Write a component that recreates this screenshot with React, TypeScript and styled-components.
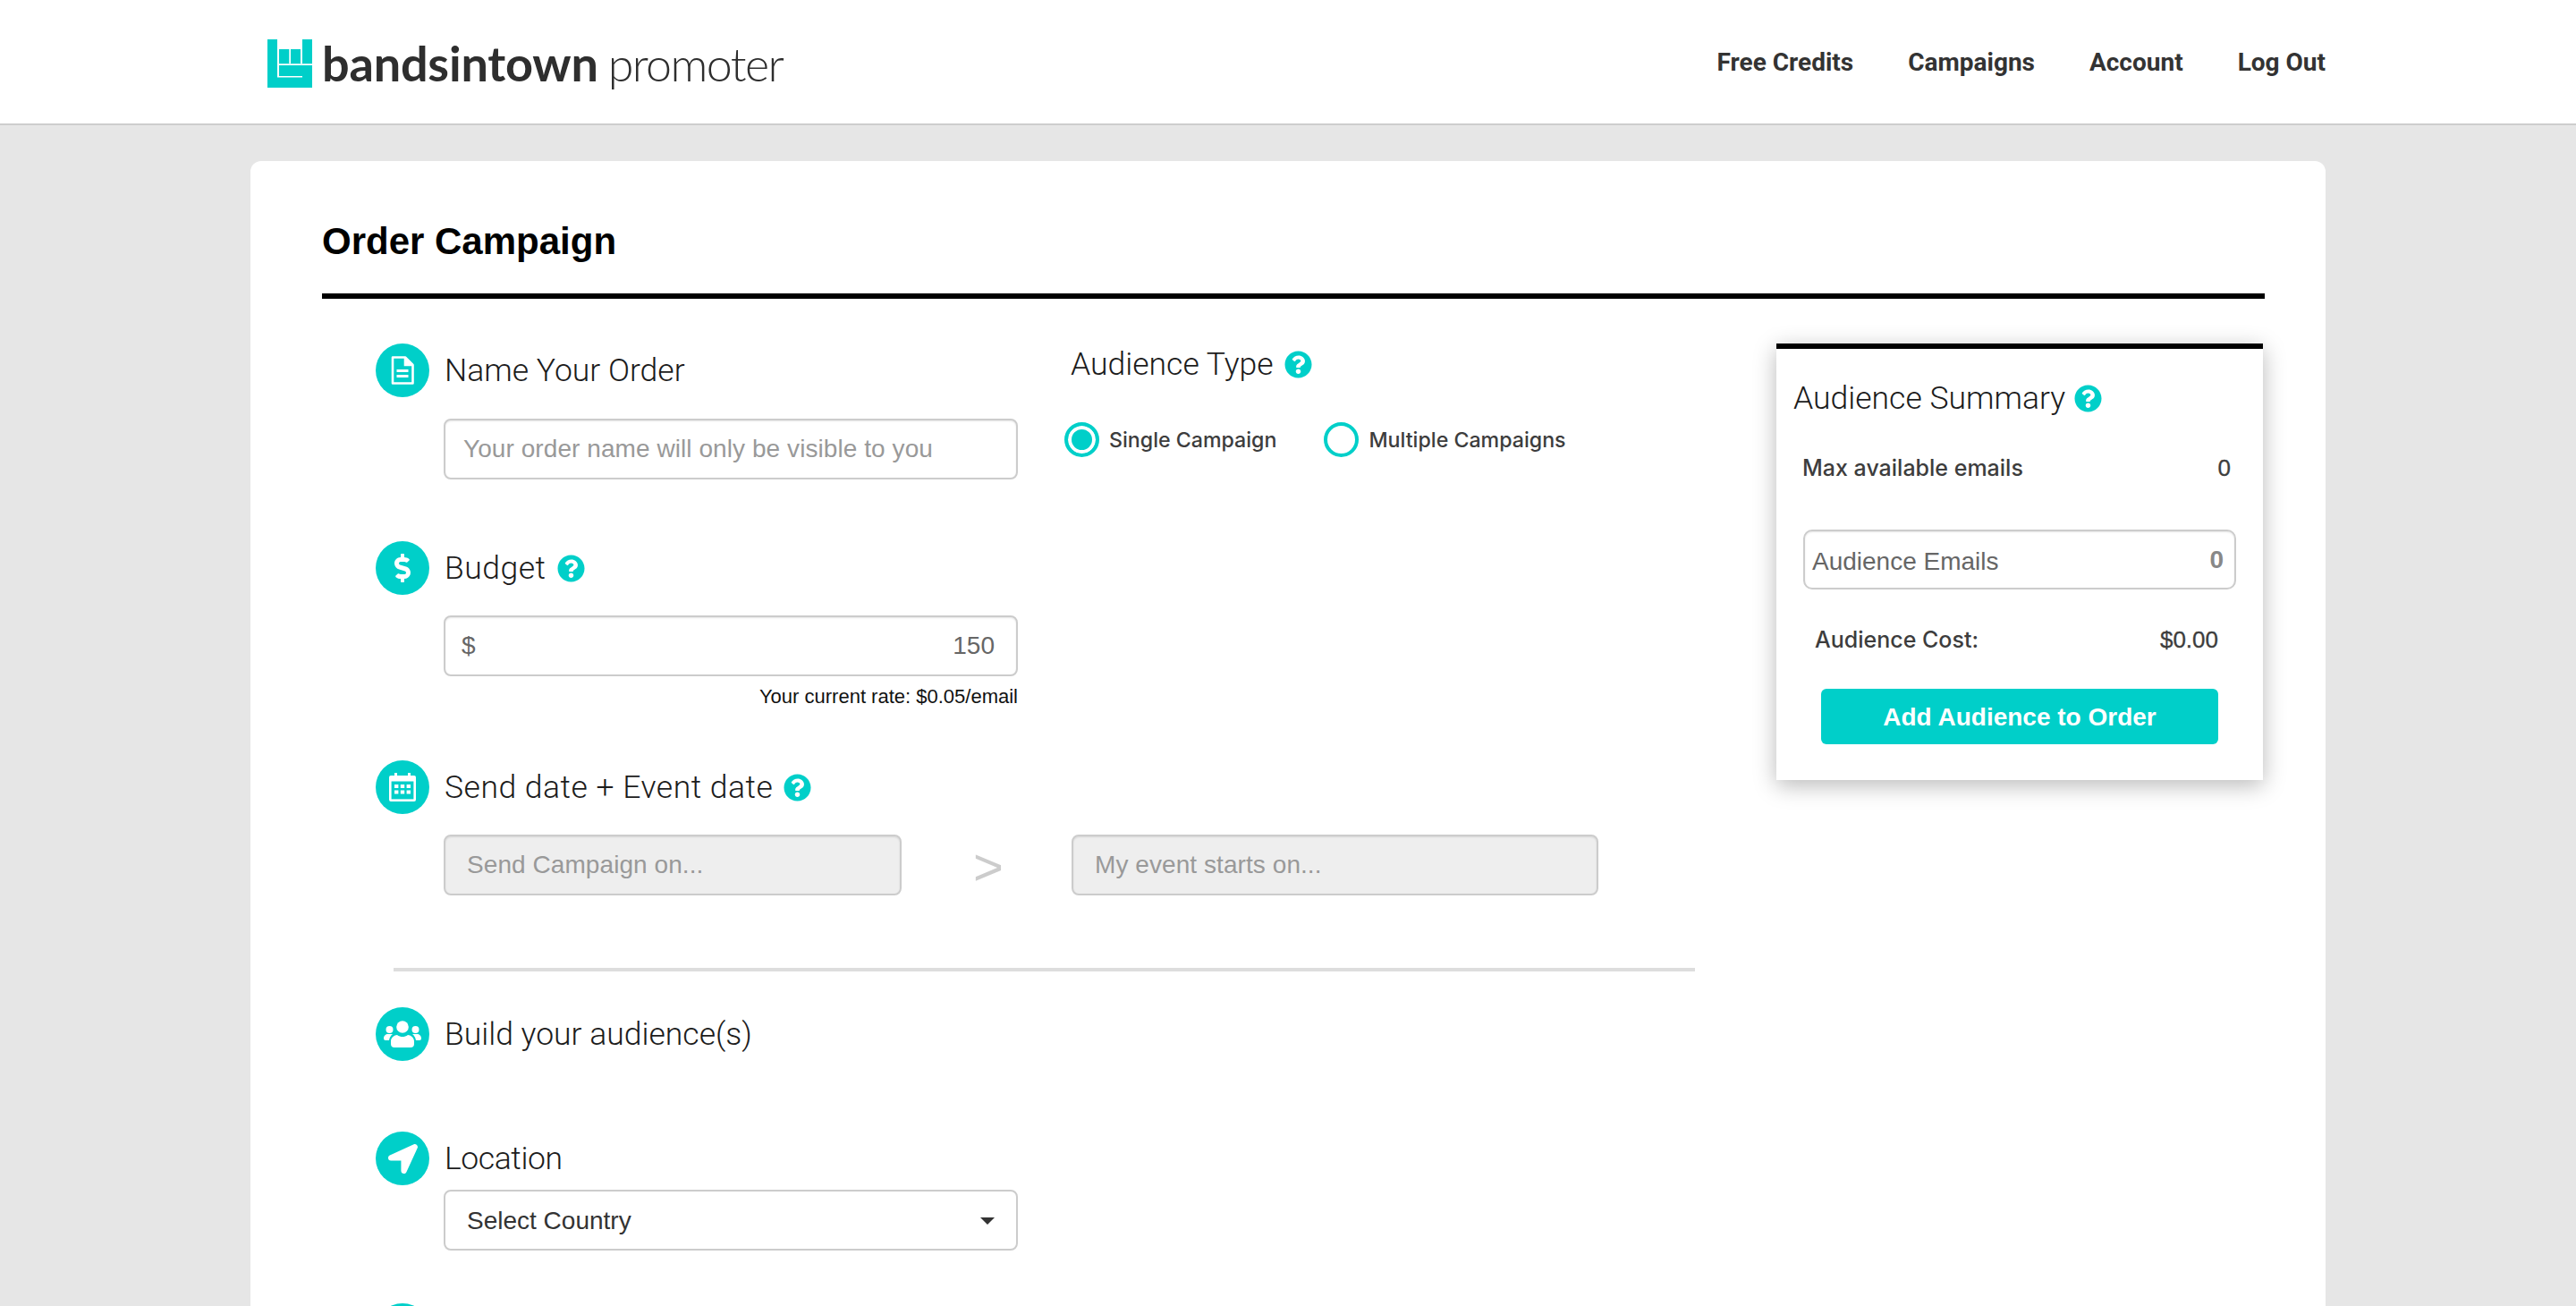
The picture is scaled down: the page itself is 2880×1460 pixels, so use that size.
import React from 'react';
import styled, { createGlobalStyle } from 'styled-components';
import { FaDollarSign, FaLocationArrow, FaQuestionCircle } from 'react-icons/fa';

const TEAL = '#00cfc9';

const Global = createGlobalStyle`
  html, body { margin: 0; padding: 0; height: 1460px; overflow: hidden; background: #e6e6e6; }
  * { box-sizing: border-box; }
  body { font-family: "Liberation Sans", Arial, sans-serif; }
`;

const Page = styled.div`
  height: 1460px;
  overflow: hidden;
  background: #e6e6e6;
`;
const TopBar = styled.header`
  height: 140px;
  background: #fff;
  border-bottom: 2px solid #cdcdcd;
  display: flex;
  align-items: center;
  justify-content: space-between;
  padding: 0 280px 0 299px;
`;
const Brand = styled.div`
  display: flex;
  align-items: center;
  height: 54px;
  margin-top: 4px;
`;
const WordMark = styled.span`
  font-family: Lato, sans-serif;
  font-weight: 700;
  font-size: 54px;
  letter-spacing: -0.2px;
  color: #2e2e2e;
  margin-left: 11px;
  line-height: 54px;
`;
const WordSub = styled.span`
  font-family: Lato, sans-serif;
  font-weight: 300;
  font-size: 52px;
  letter-spacing: -1.6px;
  color: #2e2e2e;
  margin-left: 11px;
  line-height: 54px;
`;
const Nav = styled.nav`
  display: flex;
  gap: 61px;
`;
const NavLink = styled.a`
  font-family: Roboto, sans-serif;
  font-weight: 700;
  font-size: 28px;
  color: #333;
`;
const Card = styled.main`
  width: 2320px;
  height: 1400px;
  margin: 40px 0 0 280px;
  background: #fff;
  border-radius: 12px 12px 0 0;
  padding: 0 68px 0 80px;
`;
const Heading = styled.h1`
  margin: 0;
  padding-top: 65px;
  height: 83px;
  box-sizing: content-box;
  font-size: 42px;
  line-height: 50px;
  font-weight: 700;
  color: #000;
  border-bottom: 6px solid #000;
`;
const Body = styled.div`
  display: flex;
  justify-content: space-between;
  padding-top: 50px;
`;
const FormCol = styled.div`
  width: 1535px;
  padding-left: 60px;
`;
const TopRow = styled.div`
  display: flex;
  gap: 59px;
`;
const Section = styled.section<{ $top?: number }>`
  margin-top: ${(p) => p.$top ?? 0}px;
`;
const SectionHead = styled.div`
  display: flex;
  align-items: center;
  height: 60px;
  gap: 17px;
`;
const Bubble = styled.span`
  width: 60px;
  height: 60px;
  flex: none;
  border-radius: 50%;
  background: ${TEAL};
  color: #fff;
  display: flex;
  align-items: center;
  justify-content: center;
`;
const Title = styled.h2<{ $track?: number }>`
  margin: 0;
  font-family: Roboto, sans-serif;
  font-weight: 300;
  font-size: 35.5px;
  line-height: 44px;
  letter-spacing: ${(p) => p.$track ?? 0}px;
  color: #1c1c1c;
`;
const Help = styled(FaQuestionCircle)<{ $gap?: number }>`
  color: ${TEAL};
  width: 31px;
  height: 31px;
  flex: none;
  margin-left: ${(p) => p.$gap ?? -5}px;
`;
const Field = styled.input<{ $w?: number; $grey?: boolean }>`
  display: block;
  width: ${(p) => p.$w ?? 642}px;
  height: 68px;
  margin: 24px 0 0 76px;
  border: 2px solid #ccc;
  border-radius: 8px;
  box-shadow: inset 0 1px 2px rgba(0, 0, 0, 0.1);
  background: ${(p) => (p.$grey ? '#eee' : '#fff')};
  font: 28px "Liberation Sans", Arial, sans-serif;
  letter-spacing: 0.07px;
  color: #666;
  padding: 0 20px;
  outline: none;
  &::placeholder { color: #999; opacity: 1; }
`;
const MoneyBox = styled.div`
  width: 642px;
  height: 68px;
  margin: 23px 0 0 76px;
  border: 2px solid #ccc;
  border-radius: 8px;
  box-shadow: inset 0 1px 2px rgba(0, 0, 0, 0.1);
  display: flex;
  align-items: center;
  justify-content: space-between;
  padding: 0 24px 0 18px;
  font-size: 28px;
  color: #666;
`;
const Rate = styled.div`
  width: 642px;
  margin: 10px 0 0 76px;
  text-align: right;
  font-size: 22px;
  line-height: 26px;
  color: #111;
`;
const DateRow = styled.div`
  display: flex;
  align-items: center;
  margin: 23px 0 0 0;
`;
const DateField = styled(Field)`
  margin-top: 0;
  padding: 0 24px;
  &:last-child { margin-left: 0; }
`;
const Arrow = styled.span`
  width: 190px;
  padding-left: 4px;
  text-align: center;
  font-size: 58px;
  line-height: 48px;
  color: #ccc;
  margin-top: 4px;
`;
const Divider = styled.hr`
  border: 0;
  height: 4px;
  background: #ddd;
  width: 1455px;
  margin: 81px 0 0 20px;
`;
const SelectBox = styled.div`
  width: 642px;
  height: 68px;
  margin: 5px 0 0 76px;
  border: 2px solid #ccc;
  border-radius: 8px;
  display: flex;
  align-items: center;
  justify-content: space-between;
  padding: 2px 24px 0;
  font-size: 28px;
  color: #333;
`;
const Caret = styled.i`
  width: 0;
  height: 0;
  border-left: 8px solid transparent;
  border-right: 8px solid transparent;
  border-top: 8px solid #333;
`;
const AudienceHead = styled.div`
  display: flex;
  align-items: center;
  gap: 12px;
  height: 46px;
`;
const RadioRow = styled.div`
  display: flex;
  align-items: center;
  margin-top: 42px;
  margin-left: -7px;
`;
const Radio = styled.span<{ $on?: boolean }>`
  width: 39px;
  height: 39px;
  border-radius: 50%;
  border: 4px solid ${TEAL};
  background: ${(p) => (p.$on ? TEAL : '#fff')};
  box-shadow: ${(p) => (p.$on ? 'inset 0 0 0 4px #fff' : 'none')};
  flex: none;
`;
const RadioLabel = styled.span<{ $gap: number }>`
  font-family: Inter, sans-serif;
  font-weight: 500;
  font-size: 23.2px;
  color: #3d3d3d;
  margin-left: 11px;
  margin-right: ${(p) => p.$gap}px;
`;
const Summary = styled.aside`
  width: 544px;
  height: 488px;
  margin-right: 2px;
  border-top: 6px solid #000;
  background: #fff;
  box-shadow: 0 6px 24px rgba(0, 0, 0, 0.28);
  padding: 33px 0 0 19px;
`;
const SummaryHead = styled.div`
  display: flex;
  align-items: center;
  gap: 10px;
  height: 44px;
`;
const StatRow = styled.div<{ $left: number; $right: number; $top: number }>`
  display: flex;
  justify-content: space-between;
  margin: ${(p) => p.$top}px ${(p) => p.$right}px 0 ${(p) => p.$left}px;
  font-family: Inter, sans-serif;
  font-weight: 500;
  font-size: 25px;
  line-height: 32px;
  color: #3d3d3d;
`;
const StatValue = styled.span`
  font-family: "Liberation Sans", Arial, sans-serif;
  font-size: 26px;
  -webkit-text-stroke: 0.3px #3d3d3d;
`;
const EmailBox = styled.div`
  width: 484px;
  height: 67px;
  margin: 53px 0 0 11px;
  border: 2px solid #ccc;
  border-radius: 10px;
  box-shadow: inset 0 1px 2px rgba(0, 0, 0, 0.1);
  display: flex;
  align-items: center;
  justify-content: space-between;
  padding: 5px 12px 0 8px;
  font-size: 28px;
  color: #666;
`;
const EmailCount = styled.b`
  color: #888;
  margin-top: -4px;
`;
const AddButton = styled.button`
  display: block;
  width: 444px;
  height: 62px;
  margin: 39px 0 0 31px;
  padding: 2px 0 0;
  border: 0;
  border-radius: 6px;
  background: ${TEAL};
  color: #fff;
  font: 700 28px "Liberation Sans", Arial, sans-serif;
`;

const Logo = () => (
  <svg width="50" height="54" viewBox="0 0 50 54">
    <rect width="50" height="54" fill={TEAL} />
    <path fill="#fff" d="M11 0h28v11h-28zM11 11h2v31.500h-2zM37 11h2v16h-2zM24.300 11h1.700v16h-1.700zM13 27.300h37v1.700H13zM11 41h28v1.600H11z" />
  </svg>
);
const DocIcon = () => (
  <svg width="26" height="32" viewBox="0 0 26 32" fill="none" stroke="#fff" strokeWidth="2.6">
    <path d="M2 1.500h14l8.500 8.500v20.500H2z" strokeLinejoin="round" />
    <path d="M16 1.500V10h8.500" fill="#fff" />
    <path d="M6.500 16.500h13M6.500 22.500h13" strokeWidth="3" />
  </svg>
);
const CalIcon = () => (
  <svg width="30" height="32" viewBox="0 0 30 32">
    <path fill="#fff" d="M6 0h3v3h12V0h3v3h4a2 2 0 0 1 2 2v25a2 2 0 0 1-2 2H2a2 2 0 0 1-2-2V5a2 2 0 0 1 2-2h4z" />
    <path fill={TEAL} d="M2.600 9.500h24.800v19.900H2.600z" />
    <path fill="#fff" d="M6 13h4.400v4H6zM12.800 13h4.400v4h-4.400zM19.600 13H24v4h-4.400zM6 19.600h4.400v4H6zM12.800 19.600h4.400v4h-4.400zM19.600 19.600H24v4h-4.400z" />
  </svg>
);
const UsersIcon = () => (
  <svg width="42" height="30" viewBox="0 0 42 30" fill="#fff">
    <circle cx="21" cy="7" r="6.800" />
    <circle cx="6.500" cy="10" r="4" />
    <circle cx="35.500" cy="10" r="4" />
    <path d="M12 30a4 4 0 0 1-4-4v-3c0-4 4-7 7-7 2 1.400 4 2 6 2s4-.6 6-2c3 0 7 3 7 7v3a4 4 0 0 1-4 4z" />
    <path d="M0 20c0-3 2-5 5-5h5c-2 1.500-3.500 4-4 7H2a2 2 0 0 1-2-2zM42 20c0-3-2-5-5-5h-5c2 1.500 3.500 4 4 7h4a2 2 0 0 0 2-2z" />
  </svg>
);

export default function App() {
  return (
    <Page>
      <Global />
      <TopBar>
        <Brand>
          <Logo />
          <WordMark>bandsintown</WordMark>
          <WordSub>promoter</WordSub>
        </Brand>
        <Nav>
          <NavLink>Free Credits</NavLink>
          <NavLink>Campaigns</NavLink>
          <NavLink>Account</NavLink>
          <NavLink>Log Out</NavLink>
        </Nav>
      </TopBar>
      <Card>
        <Heading>Order Campaign</Heading>
        <Body>
          <FormCol>
            <TopRow>
              <Section>
                <SectionHead>
                  <Bubble><DocIcon /></Bubble>
                  <Title>Name Your Order</Title>
                </SectionHead>
                <Field placeholder="Your order name will only be visible to you" />
              </Section>
              <div>
                <AudienceHead>
                  <Title>Audience Type</Title>
                  <Help $gap={0} />
                </AudienceHead>
                <RadioRow>
                  <Radio $on />
                  <RadioLabel $gap={53}>Single Campaign</RadioLabel>
                  <Radio />
                  <RadioLabel $gap={0}>Multiple Campaigns</RadioLabel>
                </RadioRow>
              </div>
            </TopRow>
            <Section $top={69}>
              <SectionHead>
                <Bubble><FaDollarSign size={32} /></Bubble>
                <Title $track={0.5}>Budget</Title>
                <Help />
              </SectionHead>
              <MoneyBox><span>$</span><span>150</span></MoneyBox>
              <Rate>Your current rate: $0.05/email</Rate>
            </Section>
            <Section $top={58}>
              <SectionHead>
                <Bubble><CalIcon /></Bubble>
                <Title $track={0.5}>Send date + Event date</Title>
                <Help />
              </SectionHead>
              <DateRow>
                <DateField $w={512} $grey placeholder="Send Campaign on..." />
                <Arrow>&gt;</Arrow>
                <DateField $w={589} $grey placeholder="My event starts on..." />
              </DateRow>
            </Section>
            <Divider />
            <Section $top={40}>
              <SectionHead>
                <Bubble><UsersIcon /></Bubble>
                <Title>Build your audience(s)</Title>
              </SectionHead>
            </Section>
            <Section $top={79}>
              <SectionHead>
                <Bubble><FaLocationArrow size={33} /></Bubble>
                <Title $track={-0.4}>Location</Title>
              </SectionHead>
              <SelectBox>Select Country<Caret /></SelectBox>
            </Section>
            <Section $top={59}>
              <SectionHead>
                <Bubble />
              </SectionHead>
            </Section>
          </FormCol>
          <Summary>
            <SummaryHead>
              <Title>Audience Summary</Title>
              <Help $gap={0} />
            </SummaryHead>
            <StatRow $left={10} $right={36} $top={40}><span>Max available emails</span><StatValue>0</StatValue></StatRow>
            <EmailBox><span>Audience Emails</span><EmailCount>0</EmailCount></EmailBox>
            <StatRow $left={24} $right={50} $top={40}><span>Audience Cost:</span><StatValue>$0.00</StatValue></StatRow>
            <AddButton>Add Audience to Order</AddButton>
          </Summary>
        </Body>
      </Card>
    </Page>
  );
}
